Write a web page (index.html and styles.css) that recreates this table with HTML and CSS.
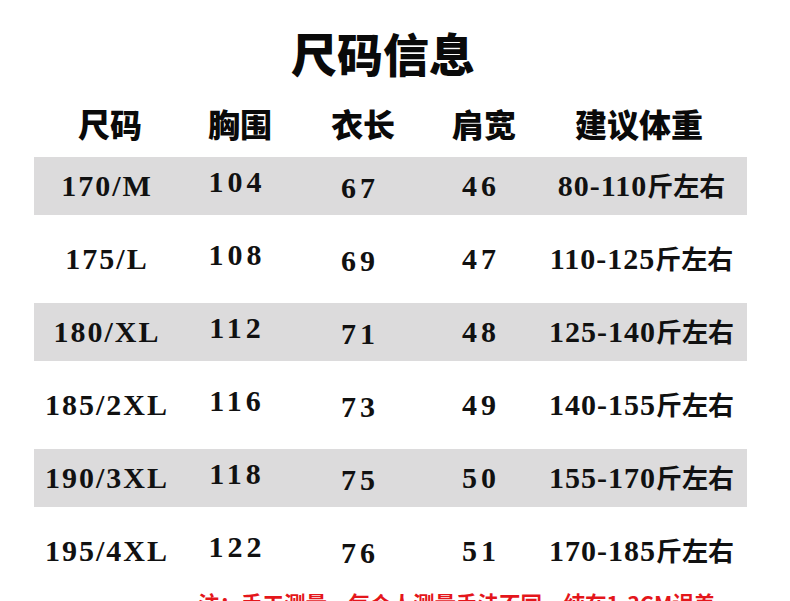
FILE: index.html
```html
<!DOCTYPE html>
<html lang="zh">
<head>
<meta charset="utf-8">
<title>尺码信息</title>
<link rel="stylesheet" href="styles.css">
</head>
<body>
<div class="page">
  <h1 class="title">尺码信息</h1>
  <div class="head">
    <div class="h c1">尺码</div>
    <div class="h c2">胸围</div>
    <div class="h c3">衣长</div>
    <div class="h c4">肩宽</div>
    <div class="h c5">建议体重</div>
  </div>
  <div class="rows">
    <div class="row gray">
      <div class="cell c1">170/M</div><div class="cell c2">104</div><div class="cell c3">67</div><div class="cell c4">46</div><div class="cell c5">80-110<span class="unit">斤左右</span></div>
    </div>
    <div class="row">
      <div class="cell c1">175/L</div><div class="cell c2">108</div><div class="cell c3">69</div><div class="cell c4">47</div><div class="cell c5">110-125<span class="unit">斤左右</span></div>
    </div>
    <div class="row gray">
      <div class="cell c1">180/XL</div><div class="cell c2">112</div><div class="cell c3">71</div><div class="cell c4">48</div><div class="cell c5">125-140<span class="unit">斤左右</span></div>
    </div>
    <div class="row">
      <div class="cell c1">185/2XL</div><div class="cell c2">116</div><div class="cell c3">73</div><div class="cell c4">49</div><div class="cell c5">140-155<span class="unit">斤左右</span></div>
    </div>
    <div class="row gray">
      <div class="cell c1">190/3XL</div><div class="cell c2">118</div><div class="cell c3">75</div><div class="cell c4">50</div><div class="cell c5">155-170<span class="unit">斤左右</span></div>
    </div>
    <div class="row">
      <div class="cell c1">195/4XL</div><div class="cell c2">122</div><div class="cell c3">76</div><div class="cell c4">51</div><div class="cell c5">170-185<span class="unit">斤左右</span></div>
    </div>
  </div>
  <p class="note">注：手工测量，每个人测量手法不同，纯在1-3CM误差</p>
</div>
</body>
</html>
```
FILE: styles.css
```css
html, body {
  margin: 0;
  padding: 0;
  background: #ffffff;
}
body {
  width: 790px;
  height: 601px;
  overflow: hidden;
  color: #111111;
  font-family: "Liberation Serif", "Noto Sans CJK SC", serif;
}
.page {
  display: flex;
  flex-direction: column;
}
.title {
  margin: 24px 0 0 0;
  padding-right: 24px;
  text-align: center;
  font-family: "Noto Sans CJK SC", sans-serif;
  font-weight: 900;
  font-size: 46px;
  line-height: 56px;
  color: #0a0a0a;
}
.head {
  display: grid;
  grid-template-columns: 146px 114px 132px 110px 210px;
  margin: 23px 0 0 37px;
  width: 712px;
}
.h {
  text-align: center;
  font-family: "Noto Sans CJK SC", sans-serif;
  font-weight: 900;
  font-size: 32px;
  line-height: 40px;
  color: #0a0a0a;
}
.head .c5 { padding-right: 10px; }
.rows {
  display: flex;
  flex-direction: column;
  gap: 15px;
  margin: 14px 0 0 34px;
  width: 713px;
}
.row {
  display: grid;
  grid-template-columns: 146px 114px 132px 110px 211px;
  height: 58px;
  align-items: center;
}
.row.gray {
  background: #dcdbdc;
}
.cell {
  text-align: center;
  font-weight: 700;
  font-size: 30px;
  letter-spacing: 2px;
  line-height: 34px;
  white-space: nowrap;
}
.cell.c2 { padding-bottom: 8px; letter-spacing: 4px; }
.cell.c3 { padding-top: 4px; letter-spacing: 4px; }
.cell.c4 { letter-spacing: 4px; }
.cell.c5 { font-size: 30px; letter-spacing: 1px; padding-bottom: 2px; }
.unit {
  font-family: "Noto Sans CJK SC", sans-serif;
  font-weight: 700;
  font-size: 26px;
  letter-spacing: 0;
}
.note {
  margin: 9px 0 0 198px;
  color: #e4161b;
  font-family: "Noto Sans CJK SC", sans-serif;
  font-weight: 700;
  font-size: 21.5px;
  line-height: 28px;
  white-space: nowrap;
}
```
